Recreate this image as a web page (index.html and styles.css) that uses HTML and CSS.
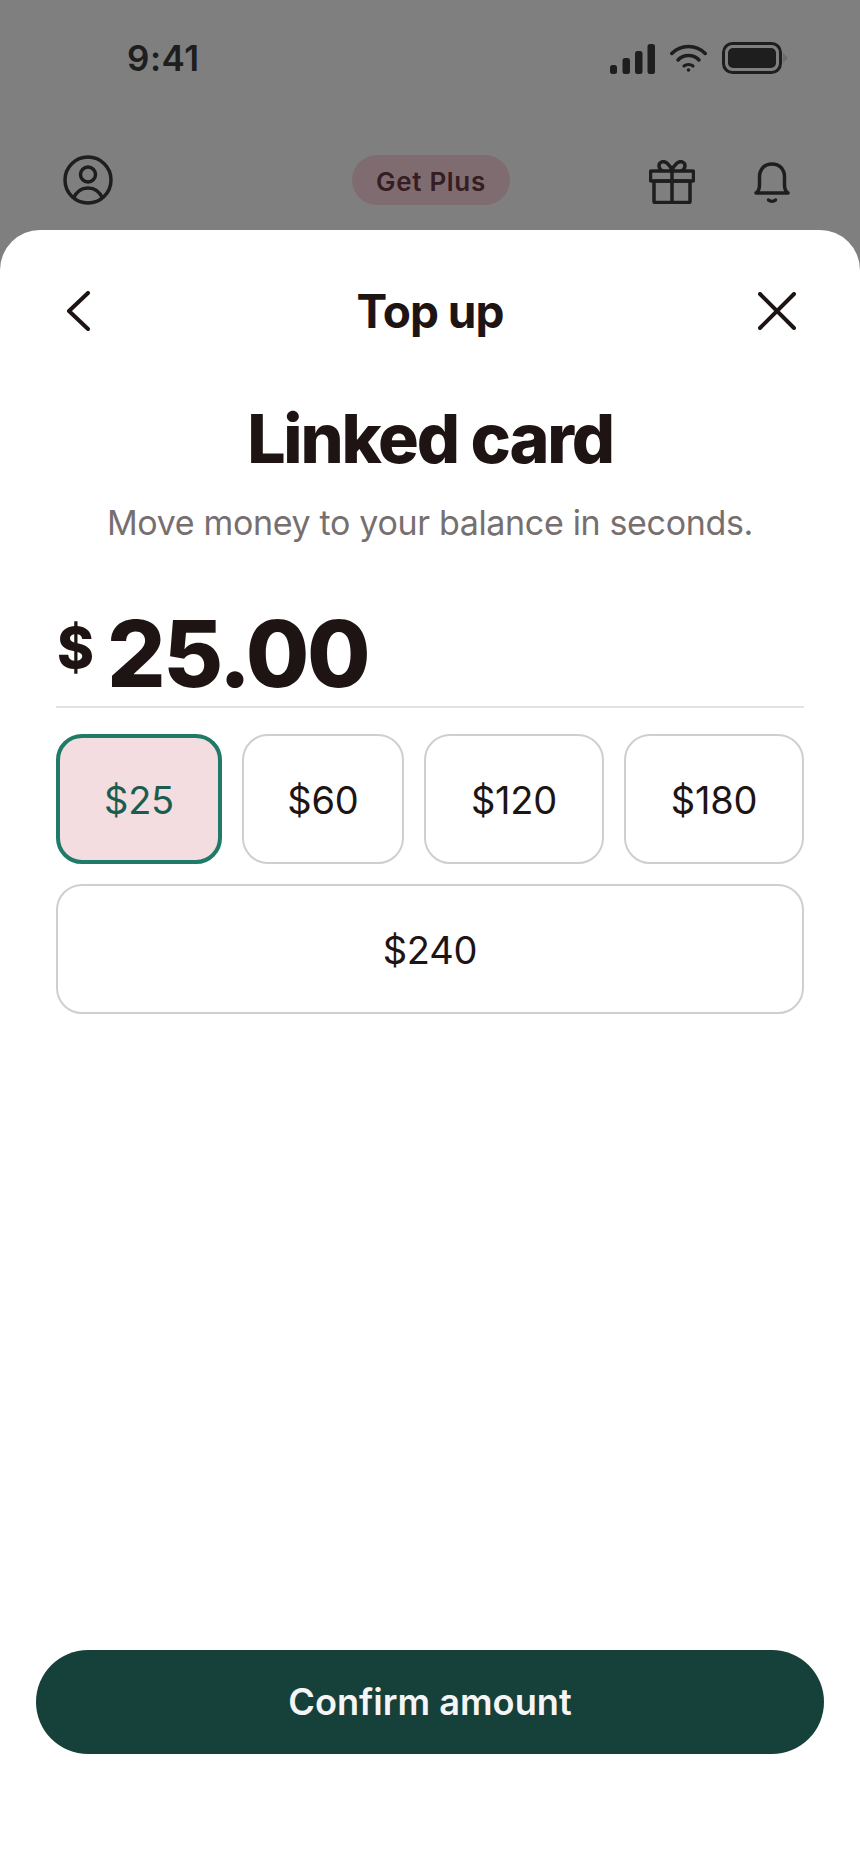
FILE: index.html
```html
<!DOCTYPE html>
<html lang="en">
<head>
<meta charset="utf-8">
<title>Top up</title>
<link rel="stylesheet" href="styles.css">
</head>
<body>
<div class="screen">
  <div class="status">
    <span class="time">9:41</span>
    <div class="status-icons">
      <svg class="i-signal" width="45" height="30" viewBox="0 0 45 30"><rect x="0" y="21" width="7" height="9" rx="2.5"/><rect x="12.500" y="14" width="7.500" height="16" rx="2.500"/><rect x="25" y="7" width="7.500" height="23" rx="2.500"/><rect x="37.500" y="0" width="7.500" height="30" rx="2.500"/></svg>
      <svg class="i-wifi" width="37" height="28" viewBox="0 0 37 28" fill="none" stroke="#3c3c3c" stroke-linecap="round"><path d="M1.800 9.500C10.500 0 26.500 0 35.200 9.500" stroke-width="3.500"/><path d="M8 16C13.500 10 23.500 10 29 16" stroke-width="3.500"/><path d="M14 22C16.500 20 20.500 20 23 22" stroke-width="3.200"/><circle cx="18.500" cy="26" r="1.800" fill="#3c3c3c" stroke="none"/></svg>
      <svg class="i-batt" width="66" height="32" viewBox="0 0 66 32"><rect x="1.500" y="1.500" width="57" height="29" rx="9" fill="none" stroke="#3c3c3c" stroke-width="3"/><rect x="6" y="6" width="48" height="20" rx="5" fill="#3c3c3c"/><path d="M61 11l5 5-5 5z" fill="#d8d8d8"/></svg>
    </div>
  </div>
  <div class="topbar">
    <svg class="i-user" width="50" height="50" viewBox="0 0 50 50" fill="none" stroke="#3c3c3c" stroke-width="3.500"><circle cx="25" cy="25" r="23"/><circle cx="25" cy="19.500" r="7.500"/><path d="M10 44c3-7 8.500-11 15-11s12 4 15 11"/></svg>
    <span class="pill">Get Plus</span>
    <div class="top-actions">
      <svg class="i-gift" width="46" height="44" viewBox="0 0 46 44" fill="none" stroke="#3c3c3c" stroke-width="3.500" stroke-linejoin="round"><rect x="1.500" y="11" width="43" height="10" rx="1"/><rect x="5" y="21" width="36" height="21.500" rx="1"/><path d="M23 11v31.500"/><path d="M23 11C21 4 16 .5 12.500 2S9 9 14 11"/><path d="M23 11C25 4 30 .5 33.500 2S37 9 32 11"/></svg>
      <svg class="i-bell" width="36" height="42" viewBox="0 0 36 42" fill="none" stroke="#3c3c3c" stroke-width="3.500" stroke-linecap="round" stroke-linejoin="round"><path d="M2 31c3-2 3.500-4 3.500-8v-8c0-8 5-13 12.500-13s12.500 5 12.500 13v8c0 4 .5 6 3.500 8z"/><path d="M14.500 38c2 1.800 5 1.800 7 0"/></svg>
    </div>
  </div>
  <div class="scrim"></div>
  <section class="sheet">
    <header class="sheet-head">
      <svg class="i-back" width="24" height="40" viewBox="0 0 24 40" fill="none" stroke="#1e1414" stroke-width="4" stroke-linecap="round" stroke-linejoin="round"><path d="M22 2 3 20l19 18"/></svg>
      <h2 class="sheet-title">Top up</h2>
      <svg class="i-close" width="38" height="38" viewBox="0 0 38 38" fill="none" stroke="#1e1414" stroke-width="4" stroke-linecap="round"><path d="M2 2l34 34M36 2 2 36"/></svg>
    </header>
    <h1 class="title">Linked card</h1>
    <p class="sub">Move money to your balance in seconds.</p>
    <div class="amount"><span class="cur">$</span><span class="val">25.00</span></div>
    <div class="chips">
      <button class="chip chip-on">$25</button>
      <button class="chip">$60</button>
      <button class="chip">$120</button>
      <button class="chip">$180</button>
      <button class="chip chip-wide">$240</button>
    </div>
    <div class="foot"><button class="cta">Confirm amount</button></div>
  </section>
</div>
</body>
</html>
```
FILE: styles.css
```css
* { box-sizing: border-box; }
html, body { margin: 0; padding: 0; }
body { font-family: Inter, "Liberation Sans", sans-serif; background: #fff; color: #1e1414; }
.screen { position: relative; width: 860px; height: 1864px; overflow: hidden; display: flex; flex-direction: column; }
.status { height: 116px; padding: 40px 72px 0 127px; display: flex; justify-content: space-between; align-items: flex-start; }
.time { font-size: 35px; font-weight: 600; line-height: 36px; color: #3c3c3c; letter-spacing: .5px; }
.status-icons { display: flex; align-items: flex-start; gap: 15px; margin-top: 2px; }
.i-signal { fill: #3c3c3c; margin-top: 2px; }
.i-wifi { margin-top: 2px; }
.topbar { height: 114px; display: flex; align-items: flex-start; justify-content: space-between; padding: 39px 0 0 63px; position: relative; }
.pill { position: absolute; left: 352px; top: 39px; width: 158px; height: 50px; padding-top: 2px; border-radius: 25px; background: #ffd8e0; color: #6a3a44; font-size: 26px; font-weight: 600; letter-spacing: .7px; display: flex; align-items: center; justify-content: center; }
.top-actions { display: flex; gap: 59px; padding-right: 70px; margin-top: 5px; }
.i-bell { margin-top: 2px; }
.scrim { position: absolute; inset: 0; background: rgba(0,0,0,.5); }
.sheet { position: relative; flex: 1; background: #fff; border-radius: 40px 40px 0 0; padding: 0 56px; display: flex; flex-direction: column; }
.sheet-head { height: 80px; margin-top: 41px; position: relative; display: flex; align-items: center; justify-content: space-between; padding: 0 8px 0 10px; }
.sheet-title { position: absolute; left: 0; right: 0; top: 0; margin: 0; text-align: center; font-size: 46px; line-height: 80px; font-weight: 700; letter-spacing: -1px; }
.title { margin: 49px 0 0; text-align: center; font-size: 68px; line-height: 76px; font-weight: 800; letter-spacing: -2.2px; }
.sub { margin: 25px 0 0; text-align: center; font-size: 34px; line-height: 44px; color: #776f6f; letter-spacing: -.34px; }
.amount { margin-top: 59px; height: 104px; border-bottom: 2px solid #e2e2e2; display: flex; align-items: flex-start; }
.cur { font-size: 56px; line-height: 76px; font-weight: 800; margin: 6px 13px 0 1px; }
.val { font-size: 92px; line-height: 100px; font-weight: 800; letter-spacing: -2.500px; }
.chips { margin-top: 26px; display: grid; grid-template-columns: 166px 162px 180px 180px; gap: 20px; }
.chip { font: 400 38px Inter, "Liberation Sans", sans-serif; letter-spacing: -.2px; color: #1e1414; height: 130px; padding: 2px 0 0; background: #fff; border: 2px solid #cfcfcf; border-radius: 26px; }
.chip-on { background: #f3dde1; border: 4px solid #1f7a67; color: #1c5c4e; }
.chip-wide { grid-column: 1 / -1; }
.foot { position: absolute; left: 36px; right: 36px; top: 1420px; }
.cta { width: 100%; height: 104px; border: 0; border-radius: 52px; background: #16403a; color: #f5f5f5; font: 600 36.2px Inter, "Liberation Sans", sans-serif; }
```
